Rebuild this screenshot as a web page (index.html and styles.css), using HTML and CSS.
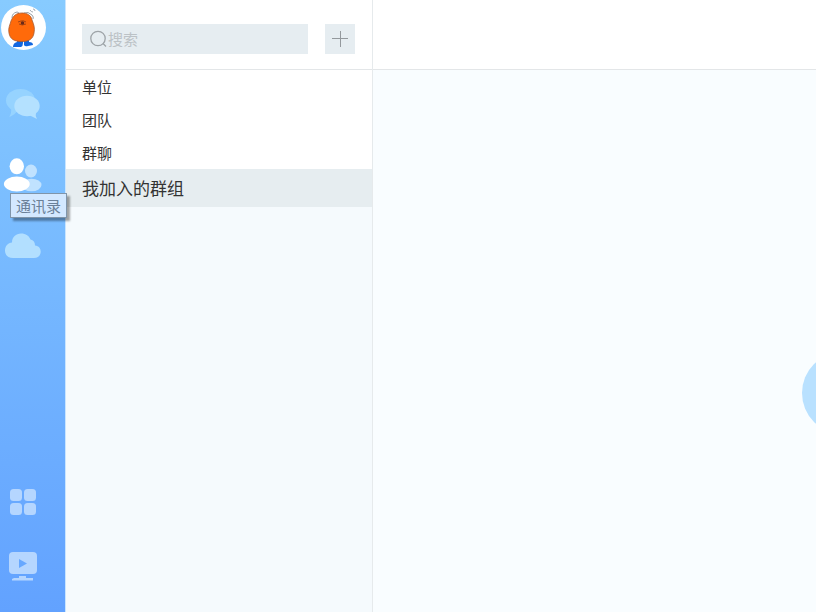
FILE: index.html
```html
<!DOCTYPE html>
<html lang="zh-CN">

<head>
    <meta charset="UTF-8">
    <meta name="viewport" content="width=device-width, initial-scale=1.0">
    <title>通讯录</title>
    <link rel="stylesheet" href="styles.css">
</head>

<body>
    <div class="app">
        <nav class="sidebar">
            <button type="button" class="avatar">
                <svg width="45" height="45" viewBox="0 0 45 45">
                    <path d="M11 13 Q11 8 16 7 Q18 7 18 9 M23 8 Q27 6 31 10 Q33 12 32 14" fill="none" stroke="#9aa0a6" stroke-width="1"/>
                    <path d="M29 5 Q30 7 32 7 M32 4 Q34 4 34 6" fill="none" stroke="#a4abb3" stroke-width="1"/>
                    <path d="M16 35 L16 37 Q12 38 12 42 L20 42 Q22 41 22 38 L22 35 Z M23 35 L23 40 Q24 42 27 41 L32 40 Q32 37 28 37 L28 35 Z" fill="#1267e0"/>
                    <path d="M21 8 C26 8 30 10 31 15 C33 20 34 23 33 28 C32 34 28 36.500 21 36.500 C13 36.500 9 34 8 28 C7 23 9 20 10 16 C12 11 15 8 21 8 Z" fill="#ff6a0a" stroke="#a85a30" stroke-width="0.800"/>
                    <path d="M17 17 L20 16 Q22 15 25 17 M18 19 Q21 21 25 19" fill="none" stroke="#8e3c14" stroke-width="0.800"/>
                    <circle cx="21.500" cy="18" r="1.800" fill="#6a2a18"/>
                </svg>
            </button>
            <button type="button" class="nav-item">
                <svg width="40" height="40" viewBox="0 0 40 40">
                    <g fill="#96d3ff">
                        <ellipse cx="17.5" cy="16.5" rx="14.5" ry="11.5"/>
                        <path d="M8 24 Q9 29 6 33 Q12 31 15 26 Z"/>
                    </g>
                    <g fill="#b4e1ff">
                        <ellipse cx="24" cy="22" rx="12.7" ry="10.3"/>
                        <path d="M26 31 Q30 33 34 35 Q32 32 33 28 Z"/>
                    </g>
                </svg>
            </button>
            <button type="button" class="nav-item" aria-describedby="tip">
                <svg width="40" height="40" viewBox="0 0 40 40">
                    <g fill="#c0e2ff">
                        <ellipse cx="28" cy="16" rx="6" ry="6.5"/>
                        <ellipse cx="28.5" cy="30" rx="10" ry="6.3"/>
                    </g>
                    <g fill="#fff">
                        <ellipse cx="13.8" cy="11.3" rx="7.2" ry="8"/>
                        <ellipse cx="13.8" cy="29" rx="12.9" ry="7.4"/>
                    </g>
                </svg>
                <span class="tooltip" id="tip" role="tooltip">通讯录</span>
            </button>
            <button type="button" class="nav-item">
                <svg width="40" height="40" viewBox="0 0 40 40">
                    <path d="M10 32 C5 32 2 29 2 24.500 C2 20 5 17 9 16.500 C9 11 13 7.500 18 7.500 C23 7.500 26 10 27.500 13.500 C30.500 14 32 16 32 19.500 C36 20 37.700 22.500 37.700 25.500 C37.700 29.500 35 32 31 32 Z" fill="#b2dfff"/>
                </svg>
            </button>
            <div class="nav-bottom">
                <button type="button" class="nav-item">
                    <svg width="40" height="40" viewBox="0 0 40 40" fill="#b5d6ff">
                        <rect x="7" y="7" width="12" height="12" rx="3.500"/>
                        <rect x="21" y="7" width="12" height="12" rx="3.500"/>
                        <rect x="7" y="21" width="12" height="12" rx="3.500"/>
                        <rect x="21" y="21" width="12" height="12" rx="3.500"/>
                    </svg>
                </button>
                <button type="button" class="nav-item">
                    <svg width="40" height="40" viewBox="0 0 40 40">
                        <rect x="6" y="6" width="28" height="22" rx="4" fill="#b5d6ff"/>
                        <path d="M16 13 L24 17.500 L16 22 Z" fill="#67a8ff"/>
                        <path d="M16 30 H23 V32 H30 V34.500 H9 V33 L11 32 H16 Z" fill="#b5d6ff"/>
                    </svg>
                </button>
            </div>
        </nav>

        <aside class="contacts">
            <div class="toolbar">
                <label class="search">
                    <svg width="18" height="18" viewBox="0 0 18 18" fill="none" stroke="#9da3a7" stroke-width="1.300">
                        <circle cx="8" cy="8.500" r="7.200"/>
                        <path d="M13 13.500 L16 16.500"/>
                    </svg>
                    <input type="text" placeholder="搜索" aria-label="搜索">
                </label>
                <button type="button" class="add">
                    <svg width="16" height="16" viewBox="0 0 16 16" stroke="#94999d" stroke-width="1">
                        <path d="M0 7.500 H16 M8.500 0 V16"/>
                    </svg>
                </button>
            </div>
            <ul class="groups">
                <li><a href="#">单位</a></li>
                <li><a href="#">团队</a></li>
                <li><a href="#">群聊</a></li>
                <li><a href="#" class="active">我加入的群组</a></li>
            </ul>
        </aside>

        <main class="content">
            <header class="content-header"></header>
            <div class="content-body">
                <div class="bubble"></div>
            </div>
        </main>
    </div>
</body>

</html>
```
FILE: styles.css
```css
* {
    box-sizing: border-box;
}
body {
    margin: 0;
    font-family: "Noto Sans CJK SC", sans-serif;
    font-size: 15px;
    color: #333;
}
button {
    padding: 0;
    border: 0;
    background: none;
    font: inherit;
    cursor: pointer;
}
svg {
    display: block;
}
.app {
    display: flex;
    height: 100vh;
    overflow: hidden;
}

/* left navigation */
.sidebar {
    display: flex;
    flex-direction: column;
    align-items: flex-start;
    gap: 31px;
    width: 66px;
    flex-shrink: 0;
    padding: 5px 0 26px 3px;
    background: linear-gradient(#87cbff, #62a2ff);
    border-right: 1px solid #c9e5ff;
}
.avatar {
    width: 45px;
    height: 45px;
    margin: 0 0 3px -2px;
    border-radius: 50%;
    background: #fff;
}
.nav-item {
    position: relative;
    width: 40px;
    height: 40px;
}
.nav-bottom {
    display: flex;
    flex-direction: column;
    gap: 24px;
    margin-top: auto;
}
.tooltip {
    position: absolute;
    top: 38px;
    left: 7px;
    z-index: 1;
    padding: 0 5px;
    line-height: 23px;
    white-space: nowrap;
    color: #6a8098;
    background: #d3e8ff;
    border: 1px solid #8095aa;
    box-shadow: 3px 3px 2px rgba(0, 0, 0, 0.35);
}

/* contact list */
.contacts {
    width: 307px;
    flex-shrink: 0;
    background: #f5fafd;
    border-right: 1px solid #e6eaec;
}
.toolbar {
    display: flex;
    gap: 17px;
    height: 70px;
    padding: 24px 17px 0 16px;
    background: #fff;
    border-bottom: 1px solid #e3e6e8;
}
.search {
    display: flex;
    flex: 1;
    align-items: center;
    height: 30px;
    padding-left: 8px;
    background: #e6edf1;
}
.search input {
    flex: 1;
    min-width: 0;
    padding: 0 0 2px;
    border: 0;
    outline: 0;
    background: none;
    font: inherit;
}
.search input::placeholder {
    color: #bcc2c6;
}
.add {
    display: flex;
    align-items: center;
    justify-content: center;
    width: 30px;
    height: 30px;
    background: #e6edf1;
}
.groups {
    margin: 0;
    padding: 0;
    list-style: none;
    background: #fff;
}
.groups a {
    display: block;
    padding-left: 16px;
    line-height: 33px;
    color: inherit;
    text-decoration: none;
}
.groups .active {
    font-size: 17px;
    line-height: 38px;
    background: #e6edf0;
}

/* right pane */
.content {
    display: flex;
    flex: 1;
    flex-direction: column;
    min-width: 0;
}
.content-header {
    height: 70px;
    background: #fff;
    border-bottom: 1px solid #e3e6e8;
}
.content-body {
    position: relative;
    flex: 1;
    overflow: hidden;
    background: #f9fdff;
}
.bubble {
    position: absolute;
    top: 282px;
    right: -68px;
    width: 82px;
    height: 82px;
    border-radius: 50%;
    background: #b9e1ff;
}
```
